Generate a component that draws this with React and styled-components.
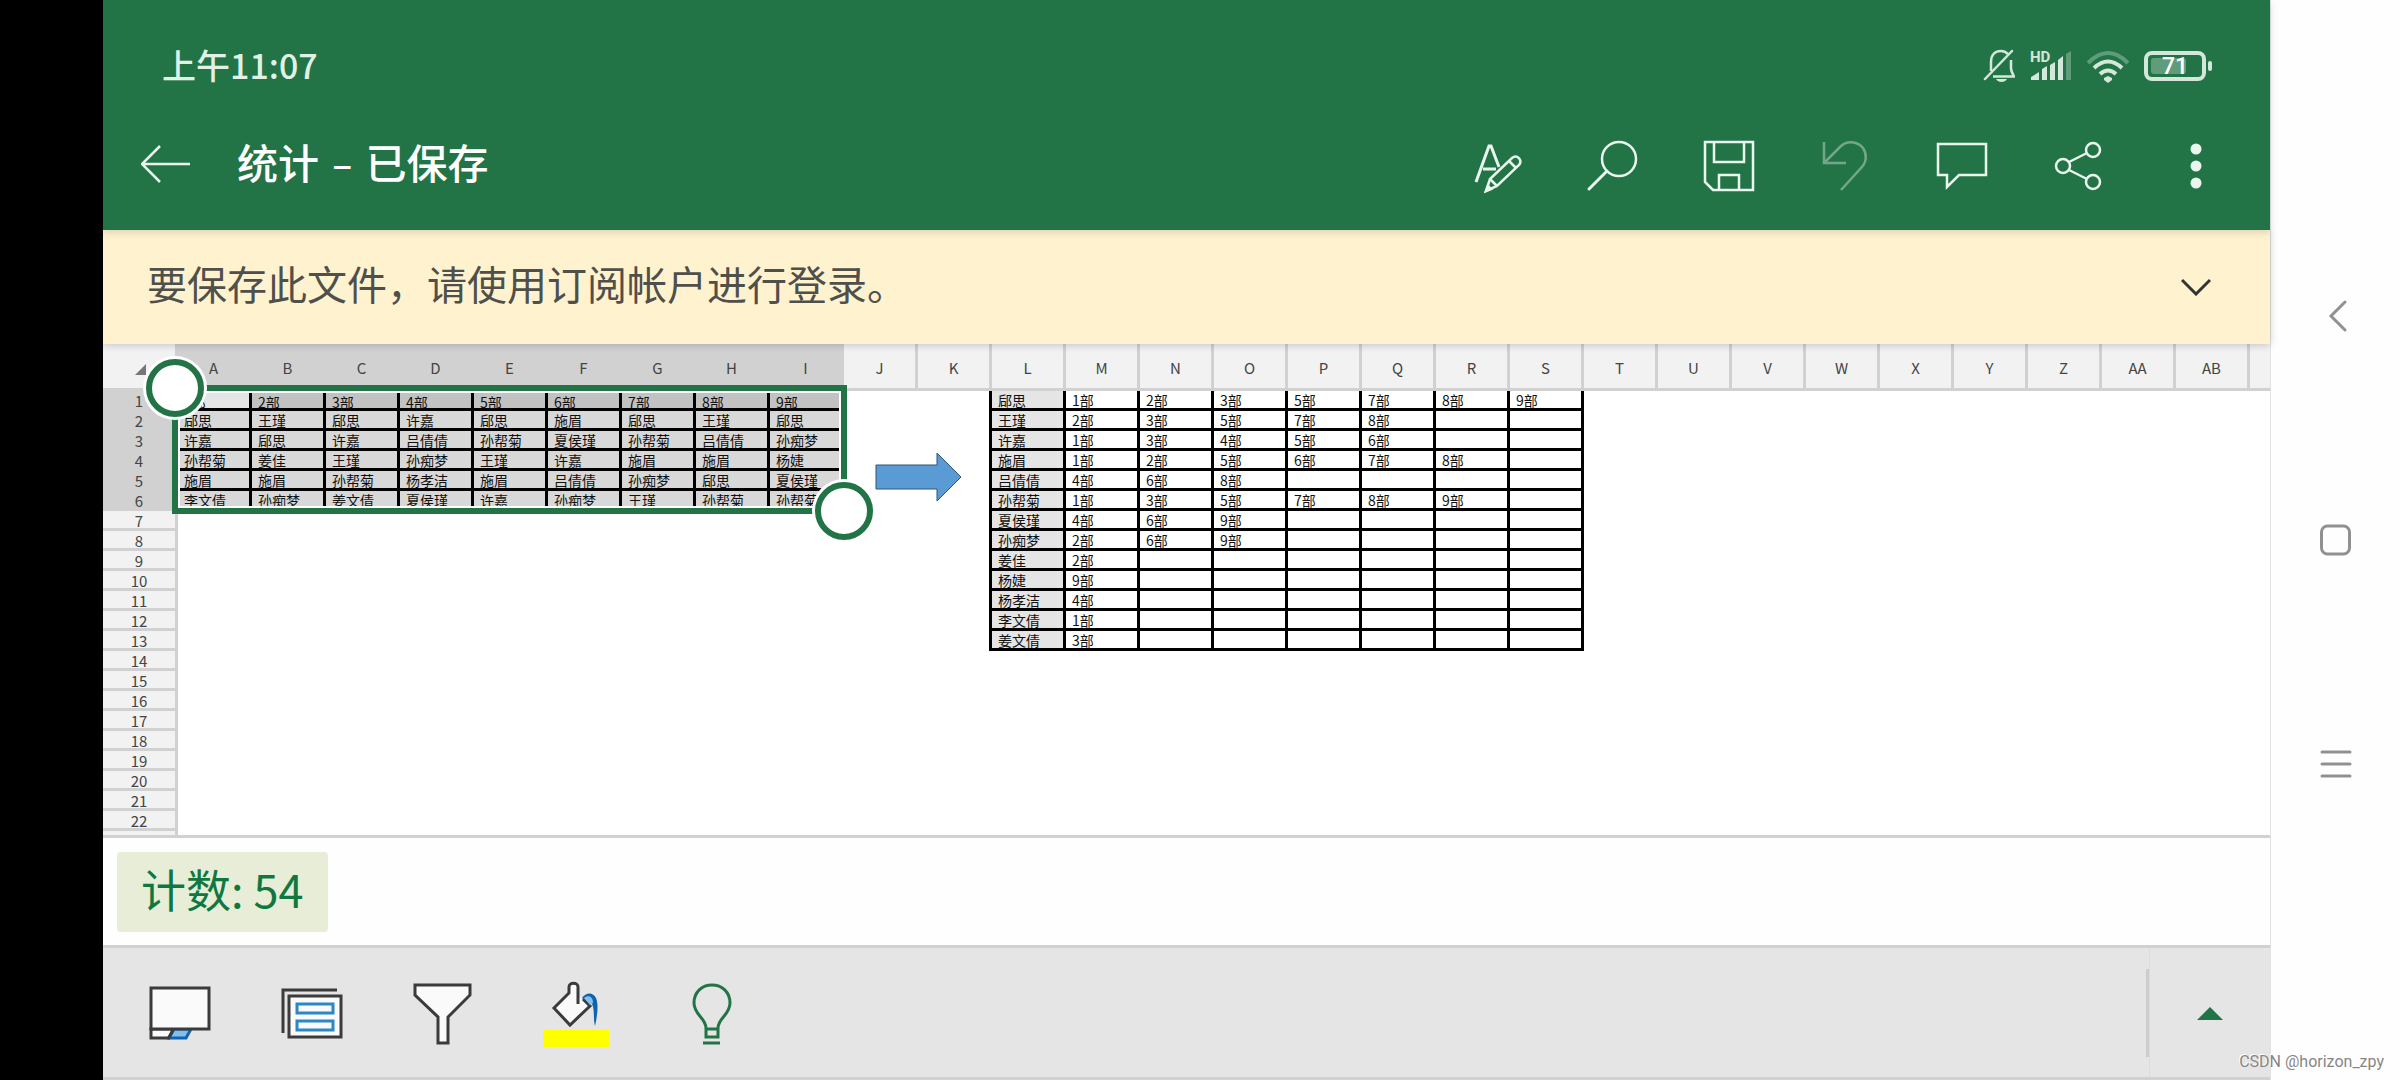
import React, { useState } from "react";
import styled, { createGlobalStyle } from "styled-components";

const GlobalStyle = createGlobalStyle`
  * {
    box-sizing: border-box;
  }
  body {
    margin: 0;
    overflow: hidden;
    background: #fefefe;
    font-family: "Noto Sans CJK SC", "Noto Sans", sans-serif;
  }
  button {
    display: flex;
    align-items: center;
    justify-content: center;
    margin: 0;
    padding: 0;
    border: none;
    background: none;
    color: inherit;
    font: inherit;
    cursor: pointer;
  }
  svg {
    display: block;
    flex: none;
  }
`;

const Screen = styled.div`
  position: relative;
  display: flex;
  height: 100vh;
`;

const Notch = styled.div`
  flex: none;
  width: 103px;
  background: #000;
`;

const Workbook = styled.main`
  flex: 1;
  min-width: 0;
  display: flex;
  flex-direction: column;
`;

const TopArea = styled.header`
  position: relative;
  z-index: 3;
  background: #227447;
  box-shadow: 0 2px 8px rgba(0, 0, 0, 0.15);
`;

const StatusBar = styled.div`
  display: flex;
  align-items: center;
  height: 102px;
  padding: 30px 58px 0 59px;
  color: #e0f2e6;
`;

const Clock = styled.span`
  flex: 1;
  padding-bottom: 2px;
  font-size: 34px;
  line-height: 48px;
  font-weight: 500;
`;

const StatusIcons = styled.div`
  display: flex;
  align-items: center;
  gap: 15px;
  color: #d3e7da;
`;

const TitleBar = styled.div`
  display: flex;
  align-items: center;
  height: 128px;
  padding: 0 17px 0 38px;
  color: #e9f5ed;
`;

const Title = styled.h1`
  flex: 1;
  margin: 0;
  padding: 0 0 2px 46px;
  font-family: "DejaVu Sans", "Noto Sans CJK SC", sans-serif;
  font-size: 41px;
  line-height: 56px;
  font-weight: 500;
  color: #fff;
`;

const ToolButton = styled.button`
  width: 116px;
  height: 100px;
  color: #e9f5ed;
  opacity: ${(props) => (props.disabled ? 0.4 : 1)};
`;

const Banner = styled.div`
  position: relative;
  z-index: 2;
  display: flex;
  align-items: center;
  justify-content: space-between;
  height: 114px;
  padding: 0 59px 0 44px;
  background: #fff2cf;
  box-shadow: 0 1px 8px rgba(0, 0, 0, 0.2);
`;

const BannerText = styled.span`
  padding-bottom: 8px;
  color: #4f4f4b;
  font-size: 40px;
  line-height: 56px;
`;

const SheetArea = styled.section`
  position: relative;
  flex: 1;
  min-height: 0;
  overflow: hidden;
  background: #fff;
  border-bottom: 3px solid #d1d1d1;
`;

const Sheet = styled.table`
  width: 100%;
  table-layout: fixed;
  border-collapse: separate;
  border-spacing: 0;

  th,
  td {
    padding: 0;
    font-weight: 400;
    text-align: left;
  }
`;

const Col = styled.col`
  width: ${(props) => props.$width}px;
`;

const ColHead = styled.th`
  height: 47px;
  background: ${(props) => (props.$selected ? "#d1d1d1" : "#f2f2f2")};
  border-right: 3px solid #d1d1d1;
  border-bottom: 3px solid #d1d1d1;
  color: #444;
  font-size: 15px;
  line-height: 20px;

  &:last-child {
    border-right: none;
  }

  div {
    padding-top: 4px;
    text-align: center;
  }
`;

const Corner = styled(ColHead)`
  svg {
    margin-left: 32px;
    margin-top: 6px;
  }
`;

const RowHead = styled.th`
  height: 20px;
  background: ${(props) => (props.$selected ? "#d1d1d1" : "#f2f2f2")};
  border-right: 3px solid #d1d1d1;
  border-bottom: 3px solid #d1d1d1;
  color: #444;

  div {
    height: 17px;
    text-align: center;
    font-size: 15px;
    line-height: 20px;
  }
`;

const Cell = styled.td`
  height: 20px;
  background: ${(props) => props.$fill || "#fff"};
  border-right: 3px solid ${(props) => (props.$right ? "#000" : "transparent")};
  border-bottom: ${(props) => (props.$bottom ? "3px solid #000" : "none")};
  color: #111;

  div {
    height: 17px;
    padding: ${(props) => (props.$low ? 2 : 0)}px 0 0 6px;
    font-size: 14px;
    line-height: 18px;
    white-space: nowrap;
  }
`;

// Frame and handles float over the grid, A1:I6
const Selection = styled.div`
  position: absolute;
  left: 69px;
  top: 41px;
  width: 675px;
  height: 129px;
  border: 6px solid #227447;
  box-shadow: inset 0 0 0 2px #fff;
`;

const Handle = styled.button`
  position: absolute;
  width: 58px;
  height: 58px;
  border: 6px solid #227447;
  border-radius: 50%;
  background: #fff;
  box-shadow: 0 0 0 3px #fff;
  ${(props) =>
    props.$end ? "right: -32px; bottom: -32px;" : "left: -32px; top: -32px;"}
`;

const ArrowShape = styled.svg`
  position: absolute;
  left: 772px;
  top: 108px;
`;

const CountBar = styled.div`
  display: flex;
  align-items: center;
  height: 107px;
  padding-left: 14px;
  background: #fefefe;
`;

const CountChip = styled.button`
  height: 80px;
  padding: 0 24px 6px;
  border-radius: 4px;
  background: #e7edd6;
  color: #0f7840;
  font-size: 45px;
  line-height: 60px;
`;

const BottomBar = styled.footer`
  display: flex;
  height: 135px;
  padding-left: 11px;
  background: #e5e5e5;
  border-top: 3px solid #d1d1d1;
  border-bottom: 3px solid #d1d1d1;
`;

const BottomTools = styled.div`
  flex: 1;
  display: flex;
`;

const BottomButton = styled.button`
  width: 132px;
  height: 129px;
`;

const Divider = styled.div`
  align-self: center;
  width: 3px;
  height: 88px;
  background: #cdcdcd;
`;

const ExpandButton = styled.button`
  width: 121px;
  border-left: 1px solid #dcdcdc;
`;

const SystemNav = styled.nav`
  flex: none;
  display: flex;
  flex-direction: column;
  align-items: center;
  justify-content: center;
  gap: 192px;
  width: 130px;
  border-left: 1px solid #e2e2e2;
  color: #919191;
`;

const NavButton = styled.button`
  width: 32px;
  height: 32px;
`;

const Watermark = styled.span`
  position: absolute;
  right: 16px;
  bottom: 8px;
  font-family: Roboto, "Liberation Sans", sans-serif;
  font-size: 16px;
  line-height: 20px;
  color: #868686;
  text-shadow: -1px -1px 0 #fff;
`;

const COLUMNS = [
  "A", "B", "C", "D", "E", "F", "G", "H", "I", "J", "K", "L", "M", "N",
  "O", "P", "Q", "R", "S", "T", "U", "V", "W", "X", "Y", "Z", "AA", "AB",
];

const MEMBERS = [
  ["1部", "2部", "3部", "4部", "5部", "6部", "7部", "8部", "9部"],
  ["郈思", "王瑾", "郈思", "许嘉", "郈思", "施眉", "郈思", "王瑾", "郈思"],
  ["许嘉", "郈思", "许嘉", "吕倩倩", "孙帮菊", "夏侯瑾", "孙帮菊", "吕倩倩", "孙痴梦"],
  ["孙帮菊", "姜佳", "王瑾", "孙痴梦", "王瑾", "许嘉", "施眉", "施眉", "杨婕"],
  ["施眉", "施眉", "孙帮菊", "杨孝洁", "施眉", "吕倩倩", "孙痴梦", "郈思", "夏侯瑾"],
  ["李文倩", "孙痴梦", "姜文倩", "夏侯瑾", "许嘉", "孙痴梦", "王瑾", "孙帮菊", "孙帮菊"],
];

const RESULTS = [
  ["郈思", "1部", "2部", "3部", "5部", "7部", "8部", "9部"],
  ["王瑾", "2部", "3部", "5部", "7部", "8部"],
  ["许嘉", "1部", "3部", "4部", "5部", "6部"],
  ["施眉", "1部", "2部", "5部", "6部", "7部", "8部"],
  ["吕倩倩", "4部", "6部", "8部"],
  ["孙帮菊", "1部", "3部", "5部", "7部", "8部", "9部"],
  ["夏侯瑾", "4部", "6部", "9部"],
  ["孙痴梦", "2部", "6部", "9部"],
  ["姜佳", "2部"],
  ["杨婕", "9部"],
  ["杨孝洁", "4部"],
  ["李文倩", "1部"],
  ["姜文倩", "3部"],
];

const ROW_COUNT = 23;
const RESULT_START = 11; // column L
const RESULT_END = 18; // column S

function getCell(row, col) {
  if (row < MEMBERS.length && col < 9) {
    let fill = "#d8d8d8";
    if (row === 0) {
      fill = col === 0 ? "#e5e5e5" : "#c2c2c2";
    }
    return { text: MEMBERS[row][col], fill, right: true, bottom: true, low: row === 0 };
  }
  if (row < RESULTS.length && col >= RESULT_START && col <= RESULT_END) {
    return {
      text: RESULTS[row][col - RESULT_START],
      fill: col === RESULT_START ? "#e5e5e5" : "#fff",
      right: true,
      bottom: true,
    };
  }
  // K only carries the left edge of the result table
  return { right: row < RESULTS.length && col === RESULT_START - 1 };
}

const line = (width) => ({
  fill: "none",
  stroke: "currentColor",
  strokeWidth: width,
});

const StatusGlyphs = () => (
  <StatusIcons>
    <svg width="32" height="34" viewBox="0 0 32 34" {...line(2.5)}>
      <path d="M8 22V13C8 6 12 2 18 2c3 0 5 1 7 3M28 11v8c0 3 1 5 3 8.500H10" />
      <path d="M2 30 29 2" strokeLinecap="round" />
      <path d="M13 30h11c-2 4-9 4-11 0Z" fill="currentColor" stroke="none" />
    </svg>
    <svg width="42" height="34" viewBox="0 0 42 34" overflow="visible" fill="currentColor">
      <text x="0" y="13" fontSize="15" fontWeight="700" fontFamily="Roboto, sans-serif">HD</text>
      <path d="M1 31v-3l8-5v8ZM12 31V20l5-3v14ZM20 31V16l5-3v18ZM28 31V11l5-4v24Z" />
      <path d="M36 31V5l5-3v29Z" opacity="0.35" />
    </svg>
    <svg width="42" height="34" viewBox="0 0 42 34" {...line(4)}>
      <path d="M1 14Q21-6 41 14" opacity="0.35" />
      <path d="M7 19Q21 6 35 19M13 25q8-7 16 0" />
      <path d="m17 29 4-2 4 2v2l-4 3-4-3Z" fill="currentColor" stroke="none" />
    </svg>
    <svg width="68" height="32" viewBox="0 0 68 32" {...line(4)}>
      <rect x="2" y="3" width="58" height="26" rx="6" />
      <rect x="7" y="8" width="35" height="16" rx="3" fill="currentColor" stroke="none" opacity="0.35" />
      <rect x="64" y="11" width="4" height="10" rx="2" fill="currentColor" stroke="none" />
      <text x="31" y="24" textAnchor="middle" fontSize="23" fontWeight="500" fontFamily="Roboto, sans-serif" fill="#fff" stroke="none">71</text>
    </svg>
  </StatusIcons>
);

const TOP_TOOLS = [
  {
    label: "编辑",
    icon: (
      <>
        <path d="M2 41 15 5h2l8 21M9 28h13" strokeWidth="3" />
        <path d="m12 50 4-12 22-21c5-4 11 2 7 7L23 45Z" />
        <path d="m16 38 7 7M35 20l7 7M12 50l5-2-3-3Z" />
      </>
    ),
  },
  {
    label: "搜索",
    icon: (
      <>
        <circle cx="29" cy="18" r="17" />
        <path d="M17 30-1 48" strokeWidth="3" strokeLinecap="round" />
      </>
    ),
  },
  { label: "保存", icon: <path d="M-1 1h48v48H7l-8-8ZM8 1v20h30V1M13 48V34h20v14" /> },
  { label: "撤消", disabled: true, icon: <path d="M2 1v21h22M2 22 19 5c8-7 18-3 22 2 4 6 4 14-2 20L19 49" /> },
  { label: "批注", icon: <path d="M0 3h48v31H21L9 46V34H0Z" /> },
  {
    label: "共享",
    icon: (
      <>
        <circle cx="39" cy="9" r="7" />
        <circle cx="9" cy="25" r="7" />
        <circle cx="39" cy="41" r="7" />
        <path d="m15 21 18-9M15 29l18 9" />
      </>
    ),
  },
  {
    label: "更多",
    icon: (
      <g fill="currentColor" stroke="none">
        <circle cx="26" cy="8" r="5.500" />
        <circle cx="26" cy="25" r="5.500" />
        <circle cx="26" cy="42" r="5.500" />
      </g>
    ),
  },
];

const BOTTOM_TOOLS = [
  {
    label: "工作表",
    icon: (
      <>
        <path d="M6 51v9h18l5-9Z" fill="#fafafa" />
        <path d="M29 51h17l-5 9H24Z" fill="#83beec" stroke="#1264b3" />
        <path d="M28 52l-5 9" />
        <rect x="6" y="10" width="58" height="41" fill="#fafafa" />
      </>
    ),
  },
  {
    label: "卡片视图",
    icon: (
      <>
        <path d="M60 12H6v43" />
        <rect x="12" y="18" width="52" height="41" fill="#fafafa" />
        <g stroke="#2b88c4">
          <rect x="20" y="26" width="36" height="9" />
          <rect x="20" y="43" width="36" height="9" />
        </g>
      </>
    ),
  },
  { label: "筛选", icon: <path d="M6 7h55v10L39 39v26H29V39L6 17Z" fill="#fafafa" /> },
  {
    label: "填充颜色",
    icon: (
      <>
        <path d="M2 52h66v17H2Z" fill="#ff0" stroke="none" />
        <path d="M13 30 28 15V9c0-5 9-5 9 0v10l5 2 7 7-20 19Z" fill="#fafafa" stroke="none" />
        <path d="m42 21 7 7-20 19-16-17 15-15V9c0-5 9-5 9 0v17" />
        <path d="M41 20c4-6 11-6 14 0 3 7 1 19-1 28-2-7 0-16-3-22-1-5-4-7-9-5Z" fill="#0f62b0" stroke="none" />
        <path d="m43 20 6 7 3-2c0-6-4-9-9-5Z" fill="#83beec" stroke="none" />
      </>
    ),
  },
  {
    label: "操作说明",
    icon: (
      <g stroke="#227447">
        <path d="M33 59v-9c0-10-12-13-12-25 0-11 8-18 18-18s18 7 18 18c0 12-12 15-12 25v9ZM33 51h12M30 65h17" />
      </g>
    ),
  },
];

function SheetGrid() {
  return (
    <SheetArea>
      <Sheet>
        <colgroup>
          <Col $width={75} />
          {COLUMNS.map((name) => (
            <Col key={name} $width={74} />
          ))}
          <col />
        </colgroup>
        <thead>
          <tr>
            <Corner>
              <svg width="11" height="11" viewBox="0 0 11 11">
                <path d="M11 0v11H0Z" fill="#777" />
              </svg>
            </Corner>
            {COLUMNS.map((name, i) => (
              <ColHead key={name} scope="col" $selected={i < 9}>
                <div>{name}</div>
              </ColHead>
            ))}
            <ColHead />
          </tr>
        </thead>
        <tbody>
          {Array.from({ length: ROW_COUNT }, (_, row) => (
            <tr key={row}>
              <RowHead scope="row" $selected={row < 6}>
                <div>{row < ROW_COUNT - 1 ? row + 1 : ""}</div>
              </RowHead>
              {COLUMNS.map((name, col) => {
                const cell = getCell(row, col);
                return (
                  <Cell
                    key={name}
                    $fill={cell.fill}
                    $right={cell.right}
                    $bottom={cell.bottom}
                    $low={cell.low}
                  >
                    <div>{cell.text}</div>
                  </Cell>
                );
              })}
              <Cell />
            </tr>
          ))}
        </tbody>
      </Sheet>
      <ArrowShape width="87" height="50" viewBox="0 0 87 50">
        <path d="M1 13h61V1l24 24-24 24V37H1Z" fill="#5b9bd5" stroke="#2f5475" />
      </ArrowShape>
      <Selection>
        <Handle aria-label="选择起点" />
        <Handle aria-label="选择终点" $end />
      </Selection>
    </SheetArea>
  );
}

function App() {
  const [showBanner, setShowBanner] = useState(true);

  const handleClickBanner = () => {
    setShowBanner(false);
  };

  return (
    <Screen>
      <GlobalStyle />
      <Notch />
      <Workbook>
        <TopArea>
          <StatusBar>
            <Clock>上午11:07</Clock>
            <StatusGlyphs />
          </StatusBar>
          <TitleBar>
            <button aria-label="返回">
              <svg width="50" height="42" viewBox="0 0 50 42" {...line(2.5)}>
                <path d="M49 19H2M19 1 1 19l18 18" />
              </svg>
            </button>
            <Title>统计 – 已保存</Title>
            {TOP_TOOLS.map((tool) => (
              <ToolButton key={tool.label} aria-label={tool.label} disabled={tool.disabled}>
                <svg width="50" height="50" viewBox="0 0 50 50" overflow="visible" {...line(2.5)}>
                  {tool.icon}
                </svg>
              </ToolButton>
            ))}
          </TitleBar>
        </TopArea>
        {showBanner && (
          <Banner>
            <BannerText>要保存此文件，请使用订阅帐户进行登录。</BannerText>
            <button aria-label="展开" onClick={handleClickBanner}>
              <svg width="30" height="18" viewBox="0 0 30 18" fill="none">
                <path d="m1 2 14 14L29 2" stroke="#333" strokeWidth="3" />
              </svg>
            </button>
          </Banner>
        )}
        <SheetGrid />
        <CountBar>
          <CountChip>计数: 54</CountChip>
        </CountBar>
        <BottomBar>
          <BottomTools>
            {BOTTOM_TOOLS.map((tool) => (
              <BottomButton key={tool.label} aria-label={tool.label}>
                <svg width="70" height="70" viewBox="0 0 70 70" fill="none" stroke="#3b3b3b" strokeWidth="3">
                  {tool.icon}
                </svg>
              </BottomButton>
            ))}
          </BottomTools>
          <Divider />
          <ExpandButton aria-label="展开工具栏">
            <svg width="26" height="14" viewBox="0 0 26 14">
              <path d="M13 1 26 14H0Z" fill="#227447" />
            </svg>
          </ExpandButton>
        </BottomBar>
      </Workbook>
      <SystemNav>
        <NavButton aria-label="系统返回">
          <svg width="32" height="32" viewBox="0 0 32 32" {...line(3)} strokeLinecap="round">
            <path d="M25 2 11 16l14 14" />
          </svg>
        </NavButton>
        <NavButton aria-label="主屏幕">
          <svg width="32" height="32" viewBox="0 0 32 32" {...line(3)}>
            <rect x="1.500" y="2" width="28" height="28" rx="6" />
          </svg>
        </NavButton>
        <NavButton aria-label="最近任务">
          <svg width="32" height="32" viewBox="0 0 32 32" {...line(3)} strokeLinecap="round">
            <path d="M2 4h28M2 16h28M2 28h28" />
          </svg>
        </NavButton>
      </SystemNav>
      <Watermark>CSDN @horizon_zpy</Watermark>
    </Screen>
  );
}

export default App;
